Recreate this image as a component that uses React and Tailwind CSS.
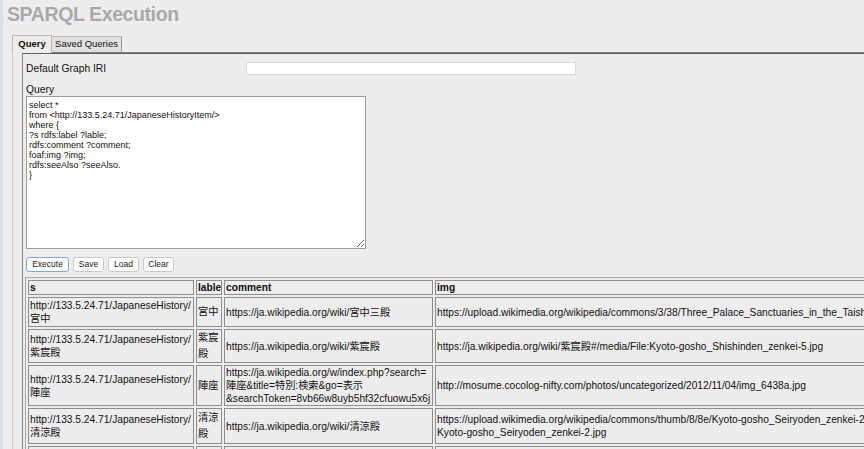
import React from 'react';

const QUERY_TEXT = `select *
from <http://133.5.24.71/JapaneseHistoryItem/>
where {
?s rdfs:label ?lable;
rdfs:comment ?comment;
foaf:img ?img;
rdfs:seeAlso ?seeAlso.
}`;

const ROWS = [
  {
    h: 'h-[30px]',
    s: ['http://133.5.24.71/JapaneseHistory/', '宮中'],
    lable: ['宮中'],
    comment: ['https://ja.wikipedia.org/wiki/宮中三殿'],
    img: ['https://upload.wikimedia.org/wikipedia/commons/3/38/Three_Palace_Sanctuaries_in_the_Taisho_era.jpg'],
  },
  {
    h: 'h-[34px]',
    s: ['http://133.5.24.71/JapaneseHistory/', '紫宸殿'],
    lable: ['紫宸', '殿'],
    comment: ['https://ja.wikipedia.org/wiki/紫宸殿'],
    img: ['https://ja.wikipedia.org/wiki/紫宸殿#/media/File:Kyoto-gosho_Shishinden_zenkei-5.jpg'],
  },
  {
    h: 'h-[40px]',
    s: ['http://133.5.24.71/JapaneseHistory/', '陣座'],
    lable: ['陣座'],
    comment: [
      'https://ja.wikipedia.org/w/index.php?search=',
      '陣座&title=特別:検索&go=表示',
      '&searchToken=8vb66w8uyb5hf32cfuowu5x6j',
    ],
    img: ['http://mosume.cocolog-nifty.com/photos/uncategorized/2012/11/04/img_6438a.jpg'],
  },
  {
    h: 'h-[36px]',
    s: ['http://133.5.24.71/JapaneseHistory/', '清涼殿'],
    lable: ['清涼', '殿'],
    comment: ['https://ja.wikipedia.org/wiki/清涼殿'],
    img: [
      'https://upload.wikimedia.org/wikipedia/commons/thumb/8/8e/Kyoto-gosho_Seiryoden_zenkei-2.jpg/800px-',
      'Kyoto-gosho_Seiryoden_zenkei-2.jpg',
    ],
  },
  {
    h: 'h-[36px]',
    s: ['http://133.5.24.71/JapaneseHistory/', '承明門'],
    lable: ['承明', '門'],
    comment: ['https://ja.wikipedia.org/wiki/承明門'],
    img: ['https://ja.wikipedia.org/wiki/承明門#/media/File:Kyoto-gosho_Shomeimon.jpg'],
  },
];

function Lines({ lines }) {
  return lines.map(function (l, i) {
    return (
      <span key={i} className="block">
        {l}
      </span>
    );
  });
}

function Btn({ children, w, focused }) {
  return (
    <button
      type="button"
      className={
        'h-[15px] bg-white rounded-[3px] border text-[8.5px] leading-none text-[#1a1a1a] flex items-center justify-center ' +
        w +
        (focused ? ' border-[#7fa9dd]' : ' border-[#c9c9c9]')
      }
    >
      {children}
    </button>
  );
}

export default function App() {
  const cell = 'border border-[#8e8e8e] px-px py-0 align-middle text-left';
  return (
    <div className="w-full h-[449px] overflow-hidden bg-[#ededed] border-l-[3px] border-[#d9dfe6] font-['Liberation_Sans','Noto_Sans_CJK_JP',sans-serif] text-[#111]">
      <h1 className="mt-[3px] ml-[4px] text-[19.5px] leading-[22px] font-bold tracking-[-0.4px] text-[#a9a9a9]">
        SPARQL Execution
      </h1>

      {/* tabs */}
      <div className="mt-[10px] ml-[9px] flex items-end">
        <div className="w-[40px] h-[18px] border-l border-t border-r border-[#b9b9b9] bg-[#ededed] flex items-center justify-center text-[9.5px] font-bold">
          Query
        </div>
        <div className="w-[70px] h-[17px] border-t border-r border-b border-t-[#bdbdbd] border-r-[#9a9a9a] border-b-[#7c7c7c] bg-[#e1e1e1] flex items-center justify-center text-[9.5px]">
          Saved Queries
        </div>
        <div className="flex-1 border-b border-[#7c7c7c]" />
      </div>

      {/* panel */}
      <div className="ml-[9px] border-l border-[#c9c9c9] pl-[9px]">
        <div className="border-t border-l border-t-[#5f5f5f] border-l-[#8a8a8a] pl-[3px] pt-[8px]">
          <div className="flex items-center h-[13px]">
            <div className="w-[220px] text-[10.3px] leading-[13px]">Default Graph IRI</div>
            <input
              type="text"
              className="w-[330px] h-[13px] bg-white border border-[#dadada] outline-none"
            />
          </div>

          <div className="mt-[9px] text-[10.3px] leading-[12px]">Query</div>
          <textarea
            readOnly
            defaultValue={QUERY_TEXT}
            className="block w-[340px] h-[153px] bg-white border border-[#9c9c9c] px-[2px] pt-[3px] text-[9px] leading-[10px] outline-none"
          />

          <div className="mt-[8px] flex gap-[4px]">
            <Btn w="w-[43px]" focused>
              Execute
            </Btn>
            <Btn w="w-[31px]">Save</Btn>
            <Btn w="w-[31px]">Load</Btn>
            <Btn w="w-[31px]">Clear</Btn>
          </div>

          <table className="mt-[5px] -ml-px table-fixed w-[1113px] border-separate border-spacing-[2px] border border-[#a8a8a8] text-[10.2px] leading-[13px]">
            <thead>
              <tr>
                <th className={cell + ' w-[166px] h-[15px] font-bold'}>s</th>
                <th className={cell + ' w-[26px] h-[15px] font-bold'}>lable</th>
                <th className={cell + ' w-[209px] h-[15px] font-bold'}>comment</th>
                <th className={cell + ' w-[700px] h-[15px] font-bold'}>img</th>
              </tr>
            </thead>
            <tbody>
              {ROWS.map(function (r, i) {
                return (
                  <tr key={i}>
                    <td className={cell + ' ' + r.h + ' whitespace-nowrap'}>
                      <Lines lines={r.s} />
                    </td>
                    <td className={cell + ' ' + r.h + ' leading-[16px] whitespace-nowrap'}>
                      <Lines lines={r.lable} />
                    </td>
                    <td className={cell + ' ' + r.h + ' whitespace-nowrap'}>
                      <Lines lines={r.comment} />
                    </td>
                    <td className={cell + ' ' + r.h + ' whitespace-nowrap overflow-hidden'}>
                      <Lines lines={r.img} />
                    </td>
                  </tr>
                );
              })}
            </tbody>
          </table>
        </div>
      </div>
    </div>
  );
}
